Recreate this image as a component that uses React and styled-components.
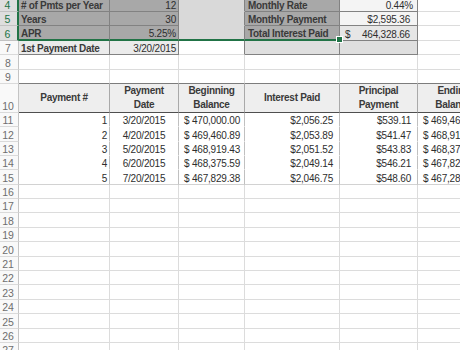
import React from "react";
import styled, { createGlobalStyle } from "styled-components";

const Global = createGlobalStyle`
  html, body { margin: 0; padding: 0; background: #ffffff; overflow: hidden; }
  body { font-family: "Liberation Sans", Arial, sans-serif; }
`;

const TEMPLATE = "19px 91px 69px 66px 95px 78px 72px";
const GREEN = "#217346";
const GRID = "#dcdcdc";
const BOX = "#828282";
const DARK = "#a8a8a8";

const Sheet = styled.div`
  display: flex;
  flex-direction: column;
  margin-top: -2.4px;
  width: 460px;
  overflow: hidden;
`;

const Row = styled.div`
  display: grid;
  grid-template-columns: ${TEMPLATE};
  height: ${(p) => p.$h}px;
`;

const RowHead = styled.div`
  box-sizing: border-box;
  display: flex;
  align-items: flex-end;
  justify-content: center;
  padding-right: 2px;
  font-size: 10.5px;
  line-height: 11px;
  color: ${(p) => (p.$sel ? GREEN : "#6e6e6e")};
  background: ${(p) => (p.$sel ? "#dedede" : "#f9f9f9")};
  border-right: ${(p) => (p.$sel ? `2px solid ${GREEN}` : "1px solid #c4c4c4")};
  border-bottom: 1px solid ${(p) => (p.$sel ? "#c2c2c2" : "#dadada")};
`;

const Cell = styled.div`
  box-sizing: border-box;
  position: relative;
  display: flex;
  align-items: flex-end;
  justify-content: ${(p) => p.$justify || "flex-start"};
  padding: 0 ${(p) => p.$pr ?? 2}px 0 ${(p) => p.$pl ?? 2}px;
  background: ${(p) => p.$bg || "#ffffff"};
  border-right: 1px solid ${(p) => p.$br || GRID};
  border-bottom: ${(p) => p.$bw || 1}px solid ${(p) => p.$bb || GRID};
  font-size: 10px;
  line-height: 11px;
  letter-spacing: ${(p) => (p.$bold ? "-0.3px" : "-0.2px")};
  font-weight: ${(p) => (p.$bold ? 700 : 400)};
  color: ${(p) => (p.$bold ? "#3a3a3a" : "#2e2e2e")};
  white-space: nowrap;
  overflow: ${(p) => (p.$handle ? "visible" : "hidden")};
`;

const HeadCell = styled.div`
  box-sizing: border-box;
  display: flex;
  align-items: center;
  justify-content: center;
  text-align: center;
  white-space: pre-line;
  overflow: hidden;
  background: #eeeeee;
  border-right: 1px solid #a9a9a9;
  border-bottom: 1px solid #4f4f4f;
  font-size: 10px;
  line-height: 14.3px;
  letter-spacing: -0.3px;
  font-weight: 700;
  color: #3a3a3a;
`;

const Acct = styled.span`
  flex: 1;
  display: flex;
  justify-content: space-between;
`;

const Handle = styled.span`
  position: absolute;
  right: -4px;
  bottom: -4px;
  width: 5px;
  height: 5px;
  background: ${GREEN};
  border: 1px solid #ffffff;
  z-index: 2;
`;

const CellView = ({ c }) => (
  <Cell
    $bg={c.bg}
    $br={c.br}
    $bb={c.bb}
    $bw={c.bw}
    $bold={c.bold}
    $justify={c.justify}
    $pl={c.pl}
    $pr={c.pr}
    $handle={c.handle}
  >
    {c.acct ? (
      <Acct>
        <span>$</span>
        <span>{c.acct}</span>
      </Acct>
    ) : (
      c.t
    )}
    {c.handle && <Handle />}
  </Cell>
);

const R = "flex-end";

const top = [
  { n: 4, a: "# of Pmts per Year", b: "12", d: "Monthly Rate", e: { t: "0.44%", pr: 4 }, ebg: "#f4f4f4" },
  { n: 5, a: "Years", b: "30", d: "Monthly Payment", e: { t: "$2,595.36", pr: 7 }, ebg: "#f4f4f4" },
  { n: 6, a: "APR", b: "5.25%", d: "Total Interest Paid", e: { acct: "464,328.66", pl: 5, pr: 7 }, ebg: "#e6e6e6", last: true },
];

const selRow = (r) => {
  const g = r.last ? GREEN : null;
  return [
    { t: r.a, bold: true, bg: DARK, br: BOX, bb: g || BOX, bw: g ? 2 : 1 },
    { t: r.b, justify: R, bg: DARK, br: BOX, bb: g || BOX, bw: g ? 2 : 1 },
    { bg: "#d9d9d9", br: BOX, bb: g || "#d9d9d9", bw: g ? 2 : 1 },
    { t: r.d, bold: true, pl: 3, bg: DARK, br: BOX, bb: g || BOX, bw: g ? 2 : 1, handle: !!g },
    { ...r.e, justify: R, bg: r.ebg, br: BOX, bb: BOX },
    {},
  ];
};

const row7 = [
  { t: "1st Payment Date", bold: true, bg: "#ebebeb", br: BOX, bb: BOX },
  { t: "3/20/2015", justify: R, bg: "#ebebeb", br: BOX, bb: BOX },
  { br: BOX },
  { bg: "#dfdfdf", br: BOX, bb: BOX },
  { bg: "#dfdfdf", br: BOX, bb: BOX },
  {},
];

const emptyRow = (bb) => Array.from({ length: 6 }, () => ({ bb }));

const headers = [
  "Payment #",
  "Payment\nDate",
  "Beginning\nBalance",
  "Interest Paid",
  "Principal\nPayment",
  "Ending\nBalance",
];

const data = [
  ["1", "3/20/2015", "470,000.00", "$2,056.25", "$539.11", "469,460.89"],
  ["2", "4/20/2015", "469,460.89", "$2,053.89", "$541.47", "468,919.43"],
  ["3", "5/20/2015", "468,919.43", "$2,051.52", "$543.83", "468,375.59"],
  ["4", "6/20/2015", "468,375.59", "$2,049.14", "$546.21", "467,829.38"],
  ["5", "7/20/2015", "467,829.38", "$2,046.75", "$548.60", "467,280.78"],
];

const dataRow = (d, last) => {
  const bb = last ? "#d2d2d2" : "#ffffff";
  const br = "#c0c0c0";
  return [
    { t: d[0], justify: R, br, bb },
    { t: d[1], justify: "center", br, bb },
    { t: `$ ${d[2]}`, pl: 5, br, bb },
    { t: d[3], justify: R, pr: 6, br, bb },
    { t: d[4], justify: R, pr: 6, br, bb },
    { t: `$ ${d[5]}`, pl: 5, br, bb },
  ];
};

const H = 14.4;

export default function App() {
  const rows = [];
  top.forEach((r) => rows.push({ n: r.n, sel: true, cells: selRow(r) }));
  rows.push({ n: 7, cells: row7 });
  rows.push({ n: 8, cells: emptyRow(GRID) });
  rows.push({ n: 9, cells: emptyRow("#7c7c7c") });

  const after = [];
  data.forEach((d, i) => after.push({ n: 11 + i, cells: dataRow(d, i === data.length - 1) }));
  for (let n = 16; n <= 27; n++) after.push({ n, cells: emptyRow(GRID) });

  return (
    <>
      <Global />
      <Sheet>
        {rows.map((r) => (
          <Row key={r.n} $h={H}>
            <RowHead $sel={r.sel}>{r.n}</RowHead>
            {r.cells.map((c, i) => (
              <CellView key={i} c={c} />
            ))}
          </Row>
        ))}
        <Row $h={H * 2}>
          <RowHead>10</RowHead>
          {headers.map((h) => (
            <HeadCell key={h}>{h}</HeadCell>
          ))}
        </Row>
        {after.map((r) => (
          <Row key={r.n} $h={H}>
            <RowHead>{r.n}</RowHead>
            {r.cells.map((c, i) => (
              <CellView key={i} c={c} />
            ))}
          </Row>
        ))}
      </Sheet>
    </>
  );
}
